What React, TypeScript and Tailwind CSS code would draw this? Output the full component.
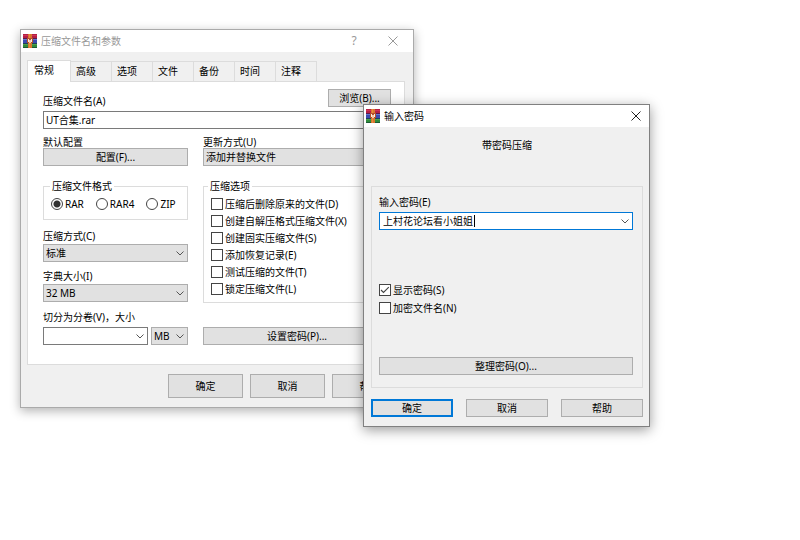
import React, { useState } from "react";

function BooksIcon() {
  return (
    <svg viewBox="0 0 14 14" className="size-3.5 shrink-0" aria-hidden="true">
      <rect x="0" y="0" width="14" height="4" fill="#b51f45" />
      <rect x="0" y="1" width="14" height="1" fill="#cc3455" />
      <rect x="0" y="4" width="14" height="1" fill="#5c1a4c" />
      <rect x="0" y="5" width="14" height="4" fill="#3b4bb0" />
      <rect x="0" y="5" width="14" height="1" fill="#6478cc" />
      <rect x="0" y="9" width="14" height="1" fill="#1f3f5c" />
      <rect x="0" y="10" width="14" height="4" fill="#2f8a3a" />
      <rect x="0" y="10" width="14" height="1" fill="#4da04c" />
      <rect x="0" y="13" width="14" height="1" fill="#1c5a34" />
      <rect x="5" y="0" width="4" height="14" fill="#d9772e" />
      <rect x="6" y="0" width="1" height="14" fill="#e88c40" />
      <rect x="4" y="4" width="6" height="5" fill="#b5502c" />
      <rect x="5" y="5" width="1" height="3" fill="#f4eee8" />
      <rect x="8" y="5" width="1" height="3" fill="#f4eee8" />
      <rect x="6" y="6" width="2" height="3" fill="#f3c9a5" />
    </svg>
  );
}

function CrossIcon() {
  return (
    <svg viewBox="0 0 10 10" className="size-2.5" fill="none" stroke="currentColor" strokeWidth="1" aria-hidden="true">
      <path d="M.5 .5l9 9M9.5 .5l-9 9" />
    </svg>
  );
}

function Chevron() {
  return (
    <svg viewBox="0 0 8 5" className="pointer-events-none absolute top-[7px] right-1 h-[5px] w-2" fill="none" stroke="#555" strokeWidth="1" aria-hidden="true">
      <path d="M.5 .5L4 4L7.5 .5" />
    </svg>
  );
}

type ButtonProps = { children: React.ReactNode; className?: string };

function PushButton({ children, className = "h-[18px] border-[#adadad]" }: ButtonProps) {
  return (
    <button type="button" className={`flex items-center justify-center bg-[#e1e1e1] leading-3 ${className} border`}>
      {children}
    </button>
  );
}

function Select({ id, options, label }: { id: string; options: string[]; label?: string }) {
  return (
    <div className="relative">
      <select id={id} aria-label={label} className="block h-[18px] w-full appearance-none border border-[#adadad] bg-[#e1e1e1] pl-0.5 leading-4 outline-none">
        {options.map((o) => (
          <option key={o}>{o}</option>
        ))}
      </select>
      <Chevron />
    </div>
  );
}

function Check({ label, initial = false }: { label: string; initial?: boolean }) {
  const [on, setOn] = useState(initial);
  return (
    <label className="flex items-center gap-0.5 leading-3">
      <span className="relative size-3 shrink-0">
        <input type="checkbox" checked={on} onChange={() => setOn(!on)} className="block size-3 appearance-none border border-[#444] bg-white" />
        {on && (
          <svg viewBox="0 0 12 12" className="pointer-events-none absolute inset-0 size-3" fill="none" stroke="#444" strokeWidth="1.1" aria-hidden="true">
            <path d="M2 6L4.5 8.5L9.8 3.2" />
          </svg>
        )}
      </span>
      {label}
    </label>
  );
}

function Radio({ label, checked = false }: { label: string; checked?: boolean }) {
  return (
    <label className="flex items-center gap-0.5 leading-3">
      <input
        type="radio"
        name="format"
        defaultChecked={checked}
        className="size-3 appearance-none rounded-full border border-[#444] bg-white checked:bg-[radial-gradient(circle,#333_0_3px,white_4px)]"
      />
      {label}
    </label>
  );
}

const tabs = ["高级", "选项", "文件", "备份", "时间", "注释"];
const archiveOptions = [
  "压缩后删除原来的文件(D)",
  "创建自解压格式压缩文件(X)",
  "创建固实压缩文件(S)",
  "添加恢复记录(E)",
  "测试压缩的文件(T)",
  "锁定压缩文件(L)",
];

function ArchiveWindow() {
  return (
    <section className="absolute top-[29px] left-5 w-[394px] border border-[#aaa] bg-[#f0f0f0] shadow-[0_3px_10px_rgba(0,0,0,0.3)]">
      <header className="flex h-[22px] items-center bg-white pl-0.5 text-[#999]">
        <BooksIcon />
        <h1 className="ml-1 flex-1">压缩文件名和参数</h1>
        <button type="button" aria-label="帮助" className="w-[38px] text-xs">?</button>
        <button type="button" aria-label="关闭" className="flex w-10 justify-center"><CrossIcon /></button>
      </header>
      <div className="pt-2 pr-2 pl-1.5">
        <div role="tablist" className="flex items-end">
          <button type="button" role="tab" aria-selected="true" className="relative z-10 -mb-px h-[22px] w-11 border border-b-0 border-[#dcdcdc] bg-white pr-2.5 pb-1">
            常规
          </button>
          {tabs.map((t) => (
            <button type="button" role="tab" aria-selected="false" key={t} className="h-5 w-[41px] border border-b-0 border-l-0 border-[#dcdcdc] pr-2.5 pb-0.5">
              {t}
            </button>
          ))}
        </div>
        <div role="tabpanel" className="border border-[#dcdcdc] bg-white pt-[7px] pr-[13px] pb-[19px] pl-[15px]">
          <div className="flex items-end justify-between">
            <label htmlFor="name">压缩文件名(A)</label>
            <PushButton className="h-[18px] w-[63px] border-[#adadad]">浏览(B)...</PushButton>
          </div>
          <input id="name" defaultValue="UT合集.rar" className="mt-1 block h-[18px] w-full border border-[#7a7a7a] bg-white px-0.5 pb-0.5 outline-none" />
          <div className="mt-[7px] grid grid-cols-[145px_1fr] gap-x-[15px]">
            <div className="flex flex-col">
              <p>默认配置</p>
              <PushButton>配置(F)...</PushButton>
            </div>
            <div className="flex flex-col">
              <label htmlFor="update">更新方式(U)</label>
              <Select id="update" options={["添加并替换文件"]} />
            </div>
          </div>
          <div className="mt-3.5 grid grid-cols-[145px_1fr] gap-x-[15px]">
            <div className="flex flex-col">
              <fieldset className="border border-[#dcdcdc] pb-2">
                <legend className="ml-1.5 px-0.5">压缩文件格式</legend>
                <div className="mt-[5px] flex h-3.5 items-center gap-3 pl-[7px]">
                  <Radio label="RAR" checked />
                  <Radio label="RAR4" />
                  <Radio label="ZIP" />
                </div>
              </fieldset>
              <div className="mt-2.5 flex flex-col gap-0.5">
                <label htmlFor="method">压缩方式(C)</label>
                <Select id="method" options={["标准"]} />
              </div>
              <div className="mt-2 flex flex-col gap-0.5">
                <label htmlFor="dict">字典大小(I)</label>
                <Select id="dict" options={["32 MB"]} />
              </div>
              <div className="mt-[9px] flex flex-col gap-1">
                <label htmlFor="volume">切分为分卷(V)，大小</label>
                <div className="grid grid-cols-[1fr_37px] gap-[3px]">
                  <div className="relative">
                    <input id="volume" className="block h-[18px] w-full border border-[#7a7a7a] bg-white px-0.5 outline-none" />
                    <Chevron />
                  </div>
                  <Select id="unit" label="单位" options={["MB"]} />
                </div>
              </div>
            </div>
            <div className="flex flex-col justify-between">
              <fieldset className="border border-[#dcdcdc] pb-[5px]">
                <legend className="ml-1 px-0.5">压缩选项</legend>
                <div className="grid auto-rows-[17px] pt-[3px] pl-[7px]">
                  {archiveOptions.map((o) => (
                    <Check key={o} label={o} />
                  ))}
                </div>
              </fieldset>
              <PushButton>设置密码(P)...</PushButton>
            </div>
          </div>
        </div>
      </div>
      <footer className="flex justify-end gap-[7px] py-[9px] pr-1.5">
        <PushButton className="h-6 w-[75px] border-[#adadad]">确定</PushButton>
        <PushButton className="h-6 w-[75px] border-[#adadad]">取消</PushButton>
        <PushButton className="h-6 w-[75px] border-[#adadad]">帮助</PushButton>
      </footer>
    </section>
  );
}

function PasswordDialog() {
  return (
    <section role="dialog" aria-labelledby="pw-title" className="absolute top-[104px] left-[363px] z-20 w-[287px] border border-[#808080] bg-[#f0f0f0] shadow-[0_3px_12px_rgba(0,0,0,0.4)]">
      <header className="flex h-[22px] items-center bg-white pl-0.5">
        <BooksIcon />
        <h2 id="pw-title" className="ml-1 flex-1">输入密码</h2>
        <button type="button" aria-label="关闭" className="flex w-[26px] justify-center text-[#222]"><CrossIcon /></button>
      </header>
      <div className="pt-3 pr-1.5 pb-[9px] pl-[7px]">
        <p className="text-center">带密码压缩</p>
        <div className="mt-[35px] flex flex-col border border-[#dcdcdc] pt-[9px] pr-[9px] pb-3 pl-[7px]">
          <label htmlFor="password">输入密码(E)</label>
          <div className="relative mt-1">
            <input id="password" defaultValue="上村花论坛看小姐姐" className="block h-[18px] w-full border border-[#0078d7] bg-white px-[3px] pb-0.5 outline-none" />
            <span className="absolute top-[3px] left-[95px] h-3 w-px bg-black" />
            <Chevron />
          </div>
          <div className="mt-[51px] mb-10 grid auto-rows-[18px]">
            <Check label="显示密码(S)" initial />
            <Check label="加密文件名(N)" />
          </div>
          <PushButton>整理密码(O)...</PushButton>
        </div>
        <footer className="mt-[11px] flex justify-between">
          <PushButton className="h-[18px] w-[82px] border-[#0078d7] outline outline-offset-[-2px] outline-[#0078d7]">确定</PushButton>
          <PushButton className="h-[18px] w-[82px] border-[#adadad]">取消</PushButton>
          <PushButton className="h-[18px] w-[82px] border-[#adadad]">帮助</PushButton>
        </footer>
      </div>
    </section>
  );
}

export default function App() {
  return (
    <main className="relative min-h-screen overflow-hidden bg-white font-['Noto_Sans','Noto_Sans_CJK_SC',sans-serif] text-[10px] leading-3 text-black">
      <ArchiveWindow />
      <PasswordDialog />
    </main>
  );
}
